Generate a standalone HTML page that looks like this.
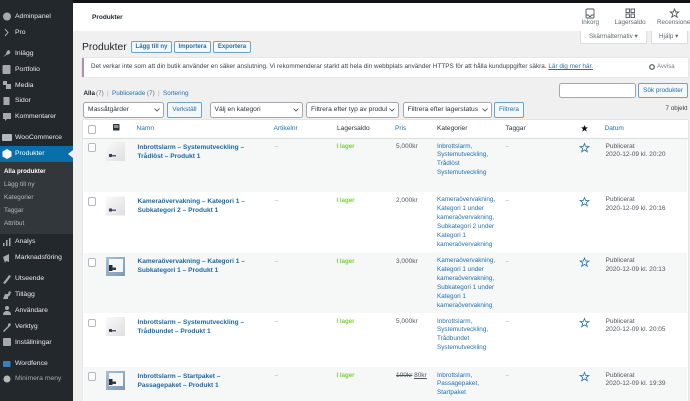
<!DOCTYPE html>
<html><head><meta charset="utf-8"><style>
html,body{margin:0;padding:0}
body{width:690px;height:401px;overflow:hidden;background:#f0f0f1;position:relative;font-family:"Liberation Sans",sans-serif;font-size:6.6px;color:#3c434a}
div{position:absolute;white-space:nowrap}
#w{left:0;top:0;width:690px;height:401px;overflow:hidden;filter:blur(.3px)}
.t{line-height:10px;height:10px}
.m{color:#e9eaeb;font-size:6.8px;left:15px;line-height:10px}
.s{color:#b4b9be;font-size:6.4px;left:4px;line-height:10px}
.l{color:#2271b1}
.b{color:#1c68a4;font-weight:bold;font-size:6.55px;left:137.5px;line-height:9.2px}
.g{color:#7ad03a;font-weight:bold;left:336.5px;line-height:10px;font-size:6.1px}
.c{color:#2271b1;left:437px;line-height:8.92px;font-size:6.35px}
.d{left:605.5px;line-height:8.92px;font-size:6.55px;color:#50575e}
.p{left:396px;line-height:10px;font-size:6.5px;color:#50575e}
.ds{color:#a7aaad;line-height:10px;font-size:6.5px}
.btn{border:1px solid #6fa3c9;border-radius:2px;background:#f6f7f7;color:#2271b1;text-align:center;box-sizing:border-box;font-size:6.4px}
.top{height:12px;top:41px;line-height:10px;font-weight:bold;font-size:6.05px}
.sel{background:#fff;border:1px solid #a4a8ad;border-radius:2.5px;box-sizing:border-box;font-size:6.7px;color:#2c3338;padding-left:4px;height:16px;line-height:14px;overflow:hidden;top:101.5px}
.sel svg{position:absolute;right:3px;top:5px}
.cb{width:8.5px;height:8.5px;box-sizing:border-box;border:1px solid #b5b9bd;border-radius:2px;background:#fff;left:87.5px}
.h{top:124px;font-size:6.6px;line-height:10px}
svg{position:absolute;overflow:visible}
</style></head><body><div id="w">
<div style="left:0;top:0;width:690px;height:3px;background:#111417"></div>
<div style="left:0;top:0;width:72.5px;height:401px;background:#23282d"></div>
<div style="left:73px;top:3px;width:617px;height:28px;background:#fff"></div>

<!-- sidebar -->
<div style="left:0;top:162px;width:72.5px;height:72px;background:#32373c"></div>
<div style="left:0;top:146px;width:72.5px;height:16px;background:#0a6ea8"></div>
<svg style="left:68px;top:150px" width="5" height="8"><path d="M5 0L0 4L5 8Z" fill="#f0f0f1"/></svg>
<svg style="left:0;top:0" width="16" height="401" fill="#a7aaad">
<circle cx="7" cy="16.5" r="4"/><path d="M5 29l3 3.5-3 3.5" fill="none" stroke="#a7aaad" stroke-width="1"/>
<path d="M3 57l3-3 1-3 2-1 1.5 2-1 2-3 1z"/>
<rect x="2.5" y="65" width="8" height="9" rx="1"/><rect x="3" y="81" width="4" height="4"/><rect x="6" y="84" width="5" height="5"/>
<rect x="3.5" y="97" width="6" height="8"/><path d="M3 113h8v6H7l-2 2v-2H3z"/>
<rect x="2" y="134" width="10" height="7" rx="1" fill="#b4b9be"/>
<path d="M7 149l4.5 2.5v5L7 159l-4.5-2.5v-5z" fill="#fff"/>
<rect x="3" y="243" width="1.5" height="3"/><rect x="6" y="240" width="1.5" height="6"/><rect x="9" y="238" width="1.5" height="8"/>
<path d="M3 257l6-3v8l-3-1-1 2-1-3z"/>
<path d="M3 283l4-5 2-3 2 1-2 3-4 5z"/><path d="M3 299l2-5h3l1-3 2 1-1 3-2 2v2z"/>
<circle cx="7" cy="308" r="2"/><path d="M3 315c0-3 2-4 4-4s4 1 4 4z"/>
<path d="M3 331l5-5 0-2 2-1 1 2-2 2-5 5z"/><rect x="3" y="338" width="8" height="8" rx="1"/>
<rect x="3" y="361" width="7.5" height="6" rx="1" fill="#3c7fb5"/><circle cx="7" cy="379" r="3.5" fill="#b4b9be"/></svg>
<div class="m" style="top:11.5px">Adminpanel</div>
<div class="m" style="top:27.5px">Pro</div>
<div class="m" style="top:48.5px">Inlägg</div>
<div class="m" style="top:64.5px">Portfolio</div>
<div class="m" style="top:80.5px">Media</div>
<div class="m" style="top:96px">Sidor</div>
<div class="m" style="top:112px">Kommentarer</div>
<div class="m" style="top:133px">WooCommerce</div>
<div class="m" style="top:149px;color:#fff">Produkter</div>
<div class="s" style="top:167px;color:#fff;font-weight:bold;font-size:6.15px">Alla produkter</div>
<div class="s" style="top:180px">Lägg till ny</div>
<div class="s" style="top:193px">Kategorier</div>
<div class="s" style="top:206px">Taggar</div>
<div class="s" style="top:219px">Attribut</div>
<div class="m" style="top:237px">Analys</div>
<div class="m" style="top:253px">Marknadsföring</div>
<div class="m" style="top:274px">Utseende</div>
<div class="m" style="top:290px">Tillägg</div>
<div class="m" style="top:306px">Användare</div>
<div class="m" style="top:322px">Verktyg</div>
<div class="m" style="top:337.5px">Inställningar</div>
<div class="m" style="top:358.5px">Wordfence</div>
<div class="m" style="top:374px;color:#a7aaad">Minimera meny</div>

<!-- header -->
<div class="t" style="left:92px;top:12.5px;color:#1d2327;font-weight:bold;font-size:6.5px">Produkter</div>
<svg style="left:585px;top:8px" width="100" height="12" fill="none" stroke="#50575e" stroke-width=".9">
<rect x="1" y="1" width="8" height="9" rx="1"/><path d="M1 7h2.5l1 1.5h1l1-1.5H9"/>
<rect x="41" y="1" width="3.5" height="3.5"/><rect x="46" y="1" width="3.5" height="3.5"/><rect x="41" y="6" width="3.5" height="3.5"/><rect x="46" y="6" width="3.5" height="3.5"/>
<path d="M89.5 1l1.2 3h3l-2.4 2 .9 3.2-2.700-1.800-2.700 1.800.9-3.200-2.400-2h3z"/></svg>
<div class="t" style="left:581.5px;top:18px;font-size:6.3px;color:#646970">Inkorg</div>
<div class="t" style="left:614.5px;top:18px;font-size:6.3px;color:#646970">Lagersaldo</div>
<div class="t" style="left:657px;top:18px;font-size:6.3px;color:#646970">Recensioner</div>

<div style="left:580px;top:31px;width:67px;height:13px;background:#fff;border:1px solid #dcdcde;border-top:0;box-sizing:border-box;font-size:6.3px;line-height:12px;color:#646970;padding-left:8px">Skärmalternativ ▾</div>
<div style="left:651px;top:31px;width:37px;height:13px;background:#fff;border:1px solid #dcdcde;border-top:0;box-sizing:border-box;font-size:6.3px;line-height:12px;color:#646970;padding-left:7px">Hjälp ▾</div>

<!-- title -->
<div style="left:82px;top:40.5px;font-size:10.3px;line-height:14px;color:#1d2327">Produkter</div>
<div class="btn top" style="left:131px;width:41px">Lägg till ny</div>
<div class="btn top" style="left:174px;width:37px">Importera</div>
<div class="btn top" style="left:213px;width:38px">Exportera</div>

<!-- notice -->
<div style="left:82px;top:57.5px;width:606px;height:19.5px;background:#fff;border-left:2px solid #b48ab6;box-sizing:border-box;box-shadow:0 0 1px rgba(0,0,0,.2)"></div>
<div class="t" style="left:91px;top:62px;font-size:6.38px;color:#3c434a">Det verkar inte som att din butik använder en säker anslutning. Vi rekommenderar starkt att hela din webbplats använder HTTPS för att hålla kunduppgifter säkra. <span class="l" style="text-decoration:underline">Lär dig mer här.</span></div>
<svg style="left:649px;top:64px" width="6" height="6"><circle cx="3" cy="3" r="2.3" fill="none" stroke="#50575e" stroke-width="1.2"/></svg>
<div class="t" style="left:657px;top:62px;font-size:6px;color:#787c82">Avvisa</div>

<!-- subsub -->
<div class="t" style="left:83.5px;top:88.5px;font-size:6.3px;color:#1d2327;font-weight:bold">Alla</div>
<div class="t" style="left:96px;top:88.5px;font-size:6.3px;color:#646970">(7)</div>
<div class="t" style="left:107px;top:88.5px;font-size:6.3px;color:#a7aaad">|</div>
<div class="t l" style="left:112px;top:88.5px;font-size:6.3px">Publicerade</div>
<div class="t" style="left:147px;top:88.5px;font-size:6.3px;color:#646970">(7)</div>
<div class="t" style="left:158px;top:88.5px;font-size:6.3px;color:#a7aaad">|</div>
<div class="t l" style="left:163px;top:88.5px;font-size:6.3px">Sortering</div>

<div class="sel" style="left:559px;top:83px;width:77px;height:15px"></div>
<div class="btn" style="left:638px;top:83px;width:50px;height:15px;line-height:13px">Sök produkter</div>

<!-- filters -->
<div class="sel" style="left:83px;width:81px">Massåtgärder<svg width="6" height="4"><path d="M.5.5L3 3 5.500.5" fill="none" stroke="#3c434a" stroke-width=".8"/></svg></div>
<div class="btn" style="left:167px;top:101.5px;width:35px;height:16px;line-height:14px">Verkställ</div>
<div class="sel" style="left:209.5px;width:93px">Välj en kategori<svg width="6" height="4"><path d="M.5.5L3 3 5.500.5" fill="none" stroke="#3c434a" stroke-width=".8"/></svg></div>
<div class="sel" style="left:306px;width:93px;padding-right:11px">Filtrera efter typ av produl<svg width="6" height="4"><path d="M.5.5L3 3 5.500.5" fill="none" stroke="#3c434a" stroke-width=".8"/></svg></div>
<div class="sel" style="left:402.5px;width:89px;padding-right:11px">Filtrera efter lagerstatus<svg width="6" height="4"><path d="M.5.5L3 3 5.500.5" fill="none" stroke="#3c434a" stroke-width=".8"/></svg></div>
<div class="btn" style="left:494px;top:101.5px;width:30px;height:16px;line-height:14px">Filtrera</div>
<div class="t" style="left:665.5px;top:103.5px;font-size:6.3px;color:#3c434a">7 objekt</div>

<!-- table -->
<div style="left:83px;top:120px;width:604.5px;height:281px;background:#fff;box-shadow:0 0 1px rgba(0,0,0,.25)"></div>
<div style="left:83px;top:137.5px;width:604.5px;height:1px;background:#dcdcde"></div>
<div style="left:84px;top:138.5px;width:603px;height:53.5px;background:#f6f7f7"></div>
<div style="left:84px;top:253px;width:603px;height:60px;background:#f6f7f7"></div>
<div style="left:84px;top:367px;width:603px;height:34px;background:#f6f7f7"></div>

<div class="cb" style="top:125px"></div>
<svg style="left:112.5px;top:123.5px" width="7" height="7"><rect width="6.5" height="6.5" rx=".6" fill="#2c3338"/><rect x="1" y="1" width="4.5" height="3" fill="#8c8f94"/></svg>
<div class="h l" style="left:136.5px">Namn</div>
<div class="h l" style="left:273.5px">Artikelnr</div>
<div class="h" style="left:337px;color:#2c3338">Lagersaldo</div>
<div class="h l" style="left:395px">Pris</div>
<div class="h" style="left:437px;color:#2c3338">Kategorier</div>
<div class="h" style="left:505.5px;color:#2c3338">Taggar</div>
<svg style="left:581px;top:125px" width="7" height="7"><path d="M3.500 0l1 2.400h2.500l-2 1.600.8 2.600-2.300-1.500-2.300 1.500.8-2.600-2-1.600h2.500z" fill="#111"/></svg>
<div class="h l" style="left:604.5px">Datum</div>

<!-- rows -->
<div class="cb" style="top:143px"></div><div class="cb" style="top:197.3px"></div><div class="cb" style="top:258px"></div><div class="cb" style="top:318.5px"></div><div class="cb" style="top:372.3px"></div>

<svg style="left:106px;top:142px" width="20" height="250">
<defs><linearGradient id="a" x1="0" y1="0" x2="1" y2="1"><stop offset="0" stop-color="#fafafa"/><stop offset="1" stop-color="#dedede"/></linearGradient>
<linearGradient id="e" x1="0" y1="0" x2="1" y2="1"><stop offset="0" stop-color="#a9bfd2"/><stop offset="1" stop-color="#7d98b0"/></linearGradient></defs>
<rect width="19" height="19" fill="url(#a)"/><rect x="3" y="12" width="3" height="3" fill="#3a3f55"/><rect x="6" y="13" width="4" height="1.5" fill="#5a5f75"/>
<rect y="54.5" width="19" height="19" fill="url(#a)"/><rect x="3" y="66.500" width="3" height="3" fill="#3a3f55"/><rect x="6" y="67.500" width="4" height="1.5" fill="#5a5f75"/>
<rect y="115" width="19" height="19" fill="url(#e)"/><rect x="3" y="117" width="14" height="13" fill="#f5f6f7"/><rect x="3" y="123" width="3.5" height="6" fill="#2b2b33"/><rect x="6" y="125.5" width="4" height="2.5" fill="#3c3c44"/>
<rect y="175" width="19" height="19" fill="url(#a)"/><rect x="3" y="187" width="3" height="3" fill="#3a3f55"/><rect x="6" y="188" width="4" height="1.5" fill="#5a5f75"/>
<rect y="229" width="19" height="19" fill="url(#e)"/><rect x="3" y="231" width="14" height="13" fill="#f5f6f7"/><rect x="3" y="237" width="3.5" height="6" fill="#2b2b33"/><rect x="6" y="239.5" width="4" height="2.5" fill="#3c3c44"/>
</svg>

<div class="b" style="top:142.5px">Inbrottslarm – Systemutveckling –<br>Trådlöst – Produkt 1</div>
<div class="b" style="top:196.5px">Kameraövervakning – Kategori 1 –<br>Subkategori 2 – Produkt 1</div>
<div class="b" style="top:257px">Kameraövervakning – Kategori 1 –<br>Subkategori 1 – Produkt 1</div>
<div class="b" style="top:317.5px">Inbrottslarm – Systemutveckling –<br>Trådbundet – Produkt 1</div>
<div class="b" style="top:371.5px">Inbrottslarm – Startpaket –<br>Passagepaket – Produkt 1</div>

<div class="ds" style="left:274.5px;top:142px">–</div><div class="ds" style="left:274.5px;top:196px">–</div><div class="ds" style="left:274.5px;top:256.5px">–</div><div class="ds" style="left:274.5px;top:317px">–</div><div class="ds" style="left:274.5px;top:371px">–</div>
<div class="g" style="top:142px">I lager</div><div class="g" style="top:196px">I lager</div><div class="g" style="top:256.5px">I lager</div><div class="g" style="top:317px">I lager</div><div class="g" style="top:371px">I lager</div>
<div class="p" style="top:142px">5,000kr</div><div class="p" style="top:196px">2,000kr</div><div class="p" style="top:256.5px">3,000kr</div><div class="p" style="top:317px">5,000kr</div>
<div class="p" style="top:371px"><s>100kr</s> <u>80kr</u></div>

<div class="c" style="top:142.5px">Inbrottslarm,<br>Systemutveckling,<br>Trådlöst<br>Systemutveckling</div>
<div class="c" style="top:196px">Kameraövervakning,<br>Kategori 1 under<br>kameraövervakning,<br>Subkategori 2 under<br>Kategori 1<br>kameraövervakning</div>
<div class="c" style="top:257px">Kameraövervakning,<br>Kategori 1 under<br>kameraövervakning,<br>Subkategori 1 under<br>Kategori 1<br>kameraövervakning</div>
<div class="c" style="top:317.5px">Inbrottslarm,<br>Systemutveckling,<br>Trådbundet<br>Systemutveckling</div>
<div class="c" style="top:371.5px">Inbrottslarm,<br>Passagepaket,<br>Startpaket</div>

<div class="ds" style="left:505.5px;top:142px">–</div><div class="ds" style="left:505.5px;top:196px">–</div><div class="ds" style="left:505.5px;top:256.5px">–</div><div class="ds" style="left:505.5px;top:317px">–</div><div class="ds" style="left:505.5px;top:371px">–</div>

<svg style="left:580px;top:142.5px" width="10" height="240" fill="none" stroke="#2271b1" stroke-width=".8">
<path d="M4.500.5l1.200 3h3.200l-2.600 2 1 3.300-2.800-1.900-2.800 1.900 1-3.300-2.600-2h3.200z"/>
<path transform="translate(0 54)" d="M4.500.5l1.200 3h3.200l-2.600 2 1 3.300-2.800-1.900-2.800 1.900 1-3.300-2.600-2h3.200z"/>
<path transform="translate(0 114.500)" d="M4.500.5l1.200 3h3.200l-2.600 2 1 3.300-2.800-1.900-2.800 1.900 1-3.300-2.600-2h3.200z"/>
<path transform="translate(0 175)" d="M4.500.5l1.200 3h3.200l-2.600 2 1 3.300-2.800-1.900-2.800 1.900 1-3.300-2.600-2h3.200z"/>
<path transform="translate(0 229)" d="M4.500.5l1.200 3h3.200l-2.600 2 1 3.300-2.800-1.900-2.800 1.900 1-3.300-2.600-2h3.200z"/></svg>

<div class="d" style="top:142.5px">Publicerat<br>2020-12-09 kl. 20:20</div>
<div class="d" style="top:196px">Publicerat<br>2020-12-09 kl. 20:16</div>
<div class="d" style="top:257px">Publicerat<br>2020-12-09 kl. 20:13</div>
<div class="d" style="top:317.5px">Publicerat<br>2020-12-09 kl. 20:05</div>
<div class="d" style="top:371.5px">Publicerat<br>2020-12-09 kl. 19:39</div>
</div></body></html>
